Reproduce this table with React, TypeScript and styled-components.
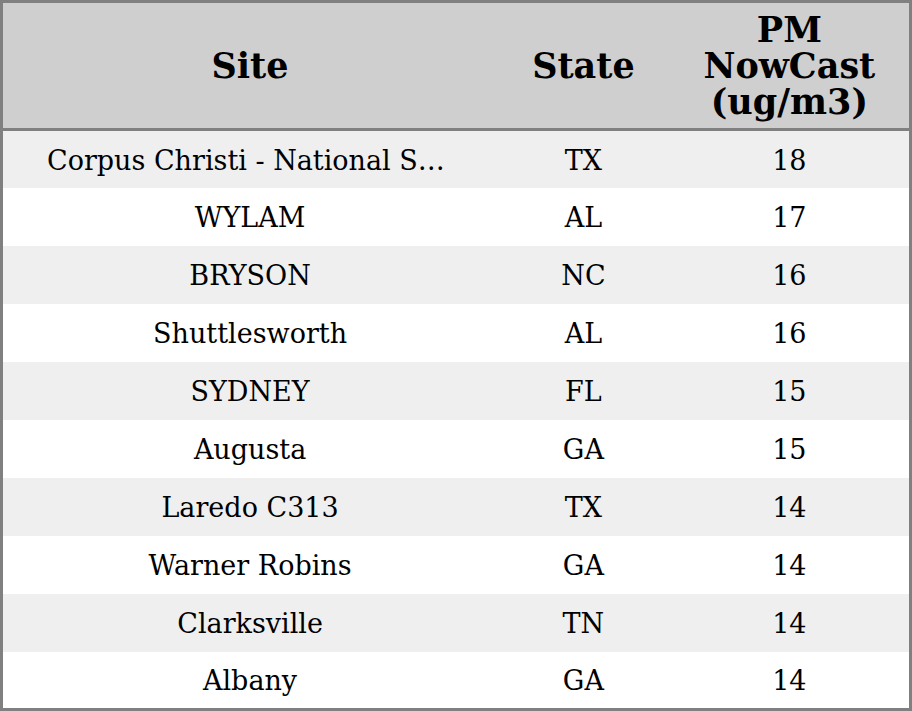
import React from 'react';
import styled, { createGlobalStyle } from 'styled-components';

type Row = {
  site: string;
  state: string;
  pm: number;
};

const rows: Row[] = [
  { site: 'Corpus Christi - National Seashore', state: 'TX', pm: 18 },
  { site: 'WYLAM', state: 'AL', pm: 17 },
  { site: 'BRYSON', state: 'NC', pm: 16 },
  { site: 'Shuttlesworth', state: 'AL', pm: 16 },
  { site: 'SYDNEY', state: 'FL', pm: 15 },
  { site: 'Augusta', state: 'GA', pm: 15 },
  { site: 'Laredo C313', state: 'TX', pm: 14 },
  { site: 'Warner Robins', state: 'GA', pm: 14 },
  { site: 'Clarksville', state: 'TN', pm: 14 },
  { site: 'Albany', state: 'GA', pm: 14 },
];

const App: React.FC = () => {
  return (
    <>
      <GlobalStyle />
      <Table>
        <colgroup>
          <col style={{ width: 494 }} />
          <col style={{ width: 172 }} />
          <col style={{ width: 240 }} />
        </colgroup>
        <thead>
          <tr>
            <Th>Site</Th>
            <Th>State</Th>
            <Th>
              PM
              <br />
              NowCast
              <br />
              (ug/m3)
            </Th>
          </tr>
        </thead>
        <tbody>
          {rows.map((row, i) => (
            <Tr key={i} $striped={i % 2 === 0}>
              <SiteCell>
                <Ellipsis>{row.site}</Ellipsis>
              </SiteCell>
              <Td>{row.state}</Td>
              <Td>{row.pm}</Td>
            </Tr>
          ))}
        </tbody>
      </Table>
    </>
  );
};

export default App;

const GlobalStyle = createGlobalStyle`
  html, body {
    margin: 0;
    padding: 0;
    background: #ffffff;
  }
  body {
    font-family: 'DejaVu Serif', serif;
    color: #000;
  }
`;

const Table = styled.table`
  width: 912px;
  height: 711px;
  border-collapse: collapse;
  table-layout: fixed;
  border: 3px solid #808080;
  box-sizing: border-box;
`;

const Th = styled.th`
  background-color: #cfcfcf;
  height: 125px;
  padding: 0;
  font-size: 35px;
  font-weight: 700;
  line-height: 36px;
  text-align: center;
  vertical-align: middle;
  border-bottom: 3px solid #808080;
`;

type TrProps = {
  $striped: boolean;
};

const Tr = styled.tr<TrProps>`
  height: 57.7px;
  background-color: ${(props) => (props.$striped ? '#efefef' : '#ffffff')};
`;

const Td = styled.td`
  padding: 2px 0 0;
  font-size: 27px;
  text-align: center;
  vertical-align: middle;
`;

const SiteCell = styled(Td)`
  padding: 2px 44px 0;
`;

const Ellipsis = styled.div`
  overflow: hidden;
  white-space: nowrap;
  text-overflow: ellipsis;
`;
